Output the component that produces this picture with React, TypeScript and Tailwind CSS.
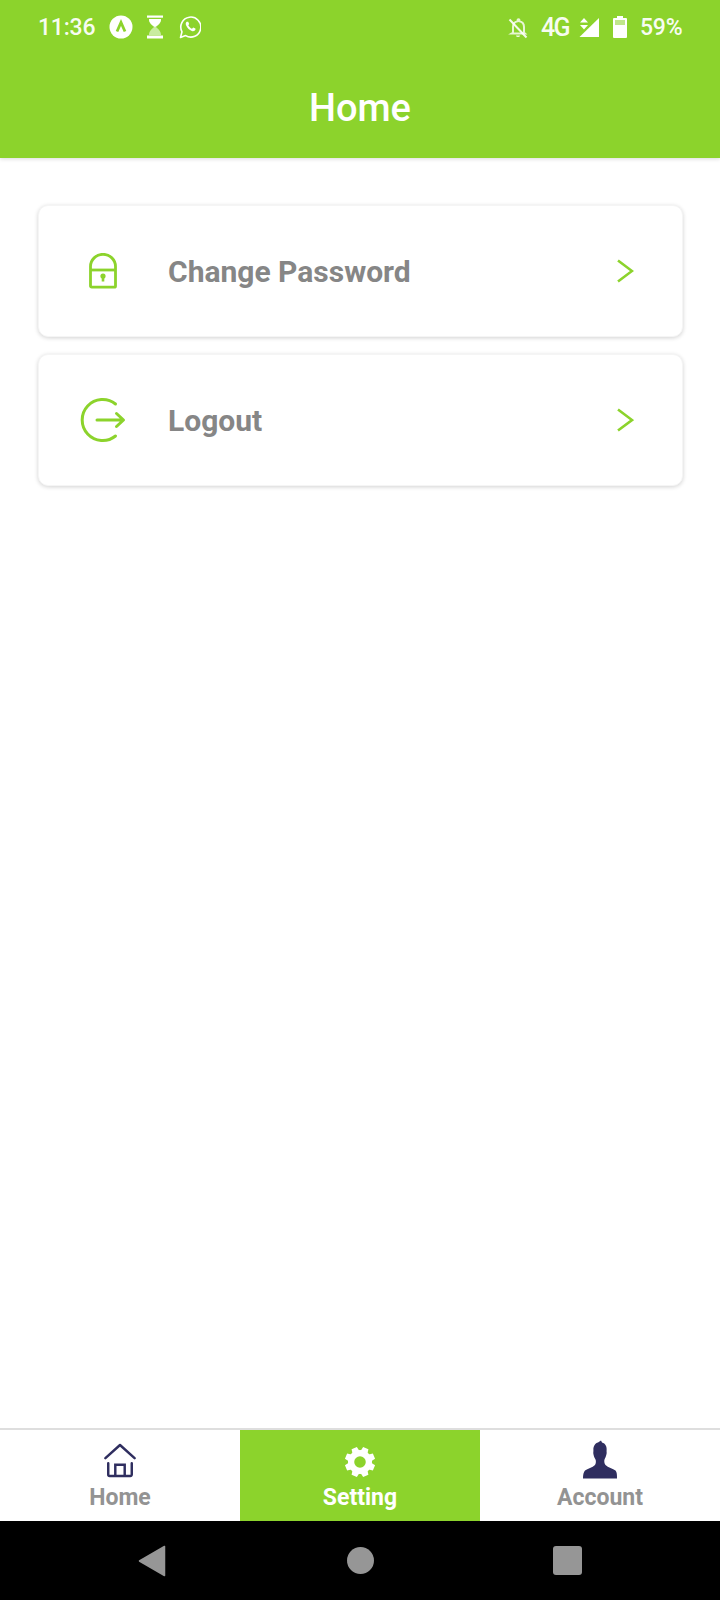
import React from "react";

const roboto = "font-['Roboto',sans-serif]";

function StatusLeft() {
  return (
    <div className="flex items-center">
      <span className="w-[56px] text-[23px] font-medium leading-none tracking-[-0.2px] text-white/95">11:36</span>
      <svg width="24" height="24" viewBox="0 0 24 24" className="ml-[15px]">
        <circle cx="12" cy="12" r="11.5" fill="#fff" />
        <path d="M8 16.5 L12 7.5 L16 16.5" fill="none" stroke="#8cd32c" strokeWidth="2.8" />
      </svg>
      <svg width="18" height="24" viewBox="0 0 18 24" className="ml-[13px]">
        <rect x="1" y="0.5" width="16" height="2.2" fill="#fff" />
        <rect x="1" y="20.5" width="16" height="3" fill="#fff" />
        <path d="M3 5H15C15 8 12 10 10 12C12 14 15 16 15 20H3C3 16 6 14 8 12C6 10 3 8 3 5Z" fill="#c9eca0" />
        <path d="M3 4H15C15 8 12 10 9 12C6 10 3 8 3 4Z" fill="#fff" />
      </svg>
      <svg width="22" height="24" viewBox="0 0 22 24" className="ml-[15px]">
        <path d="M1.5 22.5 L3 16.8 A10 10 0 1 1 6.6 20.6 Z" fill="none" stroke="#fff" strokeWidth="1.6" strokeLinejoin="round" />
        <path d="M7.7 6.7C6.6 7.6 6.4 9 7.3 10.8C8.5 13.3 10.3 15 12.8 16C14.5 16.6 15.8 16.1 16.5 14.6L16.4 13.6L14.2 12.5L13 13.7C11.4 13.1 10 11.7 9.3 10.2L10.2 9L9.2 6.7Z" fill="#fff" />
      </svg>
    </div>
  );
}

function StatusRight() {
  return (
    <div className="flex items-center">
      <svg width="20" height="22" viewBox="0 0 20 22" className="mt-[1px]">
        <path d="M5 15.5V10C5 7 6.5 5 9.5 4.3V3.3A1 1 0 0 1 11.5 3.3V4.3C14.5 5 16 7.3 16 10V15.5L17 16.5H3.5Z" fill="none" stroke="#fff" strokeWidth="2" opacity="0.8" />
        <path d="M8 18.5H12C12 20.5 8 20.5 8 18.5Z" fill="#fff" opacity="0.85" />
        <path d="M1.5 2.5L18.5 20.5" stroke="#fff" strokeWidth="2" opacity="0.9" />
      </svg>
      <span className="ml-[13px] w-[27px] text-[25px] font-medium leading-none tracking-[-1.6px] text-white/95">4G</span>
      <svg width="22" height="24" viewBox="0 0 22 24" className="ml-[10px]">
        <path d="M21 3V22H1.5Z" fill="#fff" />
        <path d="M6 3L10 7.5H2Z" fill="#fff" />
        <path d="M2 10H10L6 14.5Z" fill="#fff" />
      </svg>
      <svg width="16" height="24" viewBox="0 0 16 24" className="ml-[12px]">
        <path d="M5 1H11V3H14A1 1 0 0 1 15 4V22A1 1 0 0 1 14 23H2A1 1 0 0 1 1 22V4A1 1 0 0 1 2 3H5Z" fill="#fff" />
        <rect x="3" y="5" width="10" height="5" fill="#8cd32c" opacity="0.55" />
      </svg>
      <span className="ml-[12px] w-[42px] text-[23px] font-medium leading-none tracking-[-0.2px] text-white/95">59%</span>
    </div>
  );
}

function LockIcon() {
  return (
    <svg width="28" height="36" viewBox="0 0 28 36">
      <path d="M1.5 33V13.5A12.5 12.2 0 0 1 26.5 13.5V33A1.2 1.2 0 0 1 25.3 34.2H2.7A1.2 1.2 0 0 1 1.5 33Z" fill="none" stroke="#8cd32c" strokeWidth="2.8" />
      <path d="M1.5 17H26.5" stroke="#8cd32c" strokeWidth="2.8" />
      <circle cx="14" cy="23" r="2.6" fill="#8cd32c" />
      <rect x="12.7" y="23" width="2.6" height="5.5" fill="#8cd32c" />
    </svg>
  );
}

function LogoutIcon() {
  return (
    <svg width="46" height="46" viewBox="0 0 46 46">
      <path d="M35.5 7A20.5 20.5 0 1 0 35.5 39" fill="none" stroke="#8cd32c" strokeWidth="3" strokeLinecap="round" />
      <path d="M17 23H43M36.5 16.5L43.5 23L36.5 29.5" fill="none" stroke="#8cd32c" strokeWidth="3" strokeLinecap="round" strokeLinejoin="round" />
    </svg>
  );
}

function Chevron() {
  return (
    <svg width="18" height="24" viewBox="0 0 18 24">
      <path d="M2 1.5L16 12L2 22.5" fill="none" stroke="#8cd32c" strokeWidth="2.6" />
    </svg>
  );
}

function Row({ icon, label }: { icon: React.ReactNode; label: string }) {
  return (
    <div className="flex h-[132px] items-center rounded-[10px] border border-[#f5f5f5] bg-white shadow-[0_1px_4px_rgba(0,0,0,0.18)]">
      <div className="flex w-[127px] shrink-0 justify-center">{icon}</div>
      <span className="ml-[2px] flex-1 pt-[2px] text-[30px] font-bold leading-none text-[#868686]">{label}</span>
      <div className="mr-[48px] flex"><Chevron /></div>
    </div>
  );
}

function NavItem({ icon, label, active = false }: { icon: React.ReactNode; label: string; active?: boolean }) {
  return (
    <div className={`flex h-full flex-1 flex-col items-center ${active ? "bg-[#8cd32c]" : "bg-white"}`}>
      <div className="flex h-[51px] items-end justify-center">{icon}</div>
      <span className={`mt-[3px] text-[23px] font-bold leading-[28px] ${active ? "text-white" : "text-[#939393]"}`}>{label}</span>
    </div>
  );
}

function HomeIcon() {
  return (
    <svg width="32" height="35" viewBox="0 0 34 36" className="mb-[3px]">
      <path d="M1.5 15.5L17 1.5L32.5 15.5" fill="none" stroke="#2f2e5f" strokeWidth="2.6" strokeLinecap="round" strokeLinejoin="round" />
      <path d="M4.5 21V33A1.5 1.5 0 0 0 6 34.5H28A1.5 1.5 0 0 0 29.5 33V21" fill="none" stroke="#2f2e5f" strokeWidth="2.6" strokeLinecap="round" />
      <path d="M12 34V22.5H22V34" fill="none" stroke="#2f2e5f" strokeWidth="2.6" />
    </svg>
  );
}

function GearIcon() {
  const teeth = [0, 45, 90, 135, 180, 225, 270, 315];
  return (
    <svg width="32" height="32" viewBox="0 0 36 36" className="mb-[3px]">
      {teeth.map((a) => (
        <path key={a} d="M14.8 1H21.2L22.5 8H13.5Z" fill="#fff" transform={`rotate(${a + 22.5} 18 18)`} />
      ))}
      <circle cx="18" cy="18" r="10" fill="none" stroke="#fff" strokeWidth="7" />
    </svg>
  );
}

function PersonIcon() {
  return (
    <svg width="36" height="40" viewBox="0 0 36 40" className="mb-[1px]">
      <path d="M19 0.5L20 2.5C23.5 3.5 25 6.5 24.6 10.5C24.4 12 25 12.5 24.4 14.5C23.8 16.5 23.4 18 22.5 19.5C22 21 22.3 23.5 23.5 25C26 27.5 31 28.5 33.5 30.5C35 32 35 35 35 38.5H1C1 35 1.5 32 3 30.5C5.5 28.5 10.5 27.5 13 25C14 23.5 14.2 21 13.5 19.5C12.5 18 12 16.5 11.5 14.5C11 12.5 11.5 12 11.4 10C11.2 6 13.5 3 16 2.5Z" fill="#2f2e5f" />
    </svg>
  );
}

export default function App() {
  return (
    <div className={`flex h-[1600px] w-[720px] flex-col overflow-hidden bg-white ${roboto}`}>
      <header className="z-10 h-[158px] shrink-0 bg-[#8cd32c] shadow-[0_1px_4px_rgba(0,0,0,0.15)]">
        <div className="flex h-[54px] items-center justify-between px-[38px]">
          <StatusLeft />
          <StatusRight />
        </div>
        <div className="flex h-[104px] justify-center pt-[32px]">
          <h1 className="text-[38px] font-medium leading-[44px] text-white">Home</h1>
        </div>
      </header>
      <main className="flex flex-1 flex-col gap-[17px] pl-[38px] pr-[37px] pt-[47px]">
        <Row icon={<LockIcon />} label="Change Password" />
        <Row icon={<LogoutIcon />} label="Logout" />
      </main>
      <nav className="flex h-[93px] shrink-0 border-t-2 border-[#dedede] bg-white">
        <NavItem icon={<HomeIcon />} label="Home" />
        <NavItem icon={<GearIcon />} label="Setting" active />
        <NavItem icon={<PersonIcon />} label="Account" />
      </nav>
      <div className="flex h-[79px] shrink-0 items-center justify-center bg-black">
        <svg width="28" height="32" viewBox="0 0 28 32" className="mr-[181px]">
          <path d="M26.5 1.5V30.5L1.5 16Z" fill="#969696" stroke="#969696" strokeWidth="1.5" strokeLinejoin="round" />
        </svg>
        <div className="h-[27px] w-[27px] rounded-full bg-[#969696]" />
        <div className="ml-[179px] h-[29px] w-[29px] rounded-[3px] bg-[#969696]" />
      </div>
    </div>
  );
}
